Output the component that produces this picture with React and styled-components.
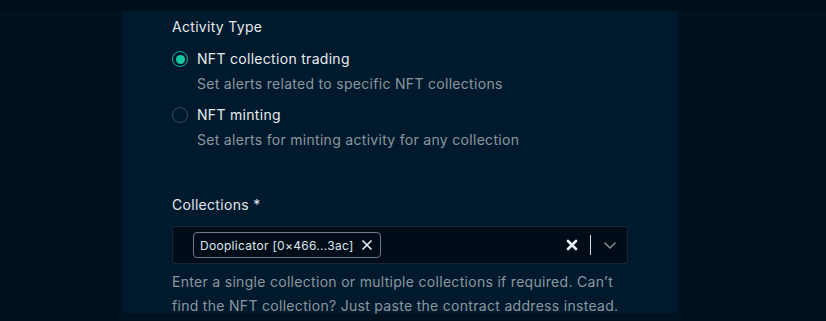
import styled, { createGlobalStyle } from 'styled-components';

const GlobalStyle = createGlobalStyle`
  html, body {
    margin: 0;
    padding: 0;
    background: #00121f;
  }
  body {
    font-family: Inter, 'Noto Sans', sans-serif;
    letter-spacing: 0.3px;
    -webkit-font-smoothing: antialiased;
  }
`;

const options = [
  {
    id: 'trading',
    label: 'NFT collection trading',
    description: 'Set alerts related to specific NFT collections',
    checked: true,
  },
  {
    id: 'minting',
    label: 'NFT minting',
    description: 'Set alerts for minting activity for any collection',
    checked: false,
  },
];

const App = () => {
  return (
    <>
      <GlobalStyle />
      <Page>
        <TopStrip />
        <Panel>
          <FieldLabel>Activity Type</FieldLabel>
          <OptionList>
            {options.map((opt) => (
              <Option key={opt.id}>
                <OptionRow>
                  <Radio checked={opt.checked} />
                  <OptionLabel>{opt.label}</OptionLabel>
                </OptionRow>
                <OptionDesc>{opt.description}</OptionDesc>
              </Option>
            ))}
          </OptionList>

          <CollectionsField>
            <FieldLabel>Collections *</FieldLabel>
            <SelectBox>
              <Values>
                <Tag>
                  <span>Dooplicator [0×466...3ac]</span>
                  <TagRemove viewBox="0 0 12 12">
                    <path d="M2 2 L10 10 M10 2 L2 10" />
                  </TagRemove>
                </Tag>
              </Values>
              <Indicators>
                <ClearIcon viewBox="0 0 12 12">
                  <path d="M2 2 L10 10 M10 2 L2 10" />
                </ClearIcon>
                <Separator />
                <Chevron viewBox="0 0 14 14">
                  <path d="M2 5 L7 10 L12 5" />
                </Chevron>
              </Indicators>
            </SelectBox>
            <HelpText>
              Enter a single collection or multiple collections if required. Can’t
              find the NFT collection? Just paste the contract address instead.
            </HelpText>
          </CollectionsField>
        </Panel>
      </Page>
    </>
  );
};

const Page = styled.div`
  width: 826px;
  height: 321px;
  overflow: hidden;
  background: #00121f;
`;

const TopStrip = styled.div`
  height: 11px;
  background: #000f1a;
`;

const Panel = styled.div`
  margin-left: 122px;
  width: 556px;
  height: 302px;
  box-sizing: border-box;
  padding: 6px 0 0 50px;
  background: #001a2d;
`;

const FieldLabel = styled.div`
  font-size: 14px;
  line-height: 20px;
  color: #e3e8ec;
`;

const OptionList = styled.div`
  display: flex;
  flex-direction: column;
  gap: 10px;
  margin-top: 11px;
`;

const Option = styled.div`
  display: flex;
  flex-direction: column;
  gap: 5px;
`;

const OptionRow = styled.div`
  display: flex;
  align-items: center;
  gap: 9px;
  height: 20px;
  margin-top: 1px;
`;

const Radio = styled.span`
  box-sizing: border-box;
  width: 16px;
  height: 16px;
  border-radius: 50%;
  border: 1.5px solid ${(p) => (p.checked ? '#12b595' : '#33485a')};
  display: flex;
  align-items: center;
  justify-content: center;
  &::after {
    content: '';
    display: ${(p) => (p.checked ? 'block' : 'none')};
    width: 9px;
    height: 9px;
    border-radius: 50%;
    background: #16c9a4;
  }
`;

const OptionLabel = styled.span`
  font-size: 14px;
  line-height: 20px;
  color: #e6ebee;
`;

const OptionDesc = styled.div`
  padding-left: 25px;
  font-size: 14px;
  line-height: 20px;
  color: #8b979f;
`;

const CollectionsField = styled.div`
  margin-top: 45px;
  width: 456px;
`;

const SelectBox = styled.div`
  margin-top: 11px;
  box-sizing: border-box;
  height: 38px;
  display: flex;
  align-items: center;
  justify-content: space-between;
  padding: 0 10px 0 20px;
  background: #000d19;
  border: 1px solid #17293a;
  border-radius: 3px;
`;

const Values = styled.div`
  display: flex;
  align-items: center;
  gap: 6px;
`;

const Tag = styled.div`
  box-sizing: border-box;
  height: 26px;
  display: flex;
  align-items: center;
  gap: 7px;
  padding: 0 7px 0 6px;
  border: 1px solid #6c7b87;
  border-radius: 4px;
  font-size: 12px;
  color: #dfe5ea;
`;

const TagRemove = styled.svg`
  width: 12px;
  height: 12px;
  fill: none;
  stroke: #e6ebee;
  stroke-width: 1.7;
  stroke-linecap: round;
`;

const Indicators = styled.div`
  display: flex;
  align-items: center;
  gap: 12px;
`;

const ClearIcon = styled.svg`
  width: 12px;
  height: 12px;
  fill: none;
  stroke: #e6ebee;
  stroke-width: 2.6;
  stroke-linecap: round;
`;

const Separator = styled.span`
  width: 1px;
  height: 20px;
  background: #d8dee3;
`;

const Chevron = styled.svg`
  width: 14px;
  height: 14px;
  fill: none;
  stroke: #8b979f;
  stroke-width: 1.4;
  stroke-linecap: round;
  stroke-linejoin: round;
`;

const HelpText = styled.p`
  margin: 6px 0 0;
  font-size: 14px;
  line-height: 24px;
  color: #8b979f;
`;

export default App;
